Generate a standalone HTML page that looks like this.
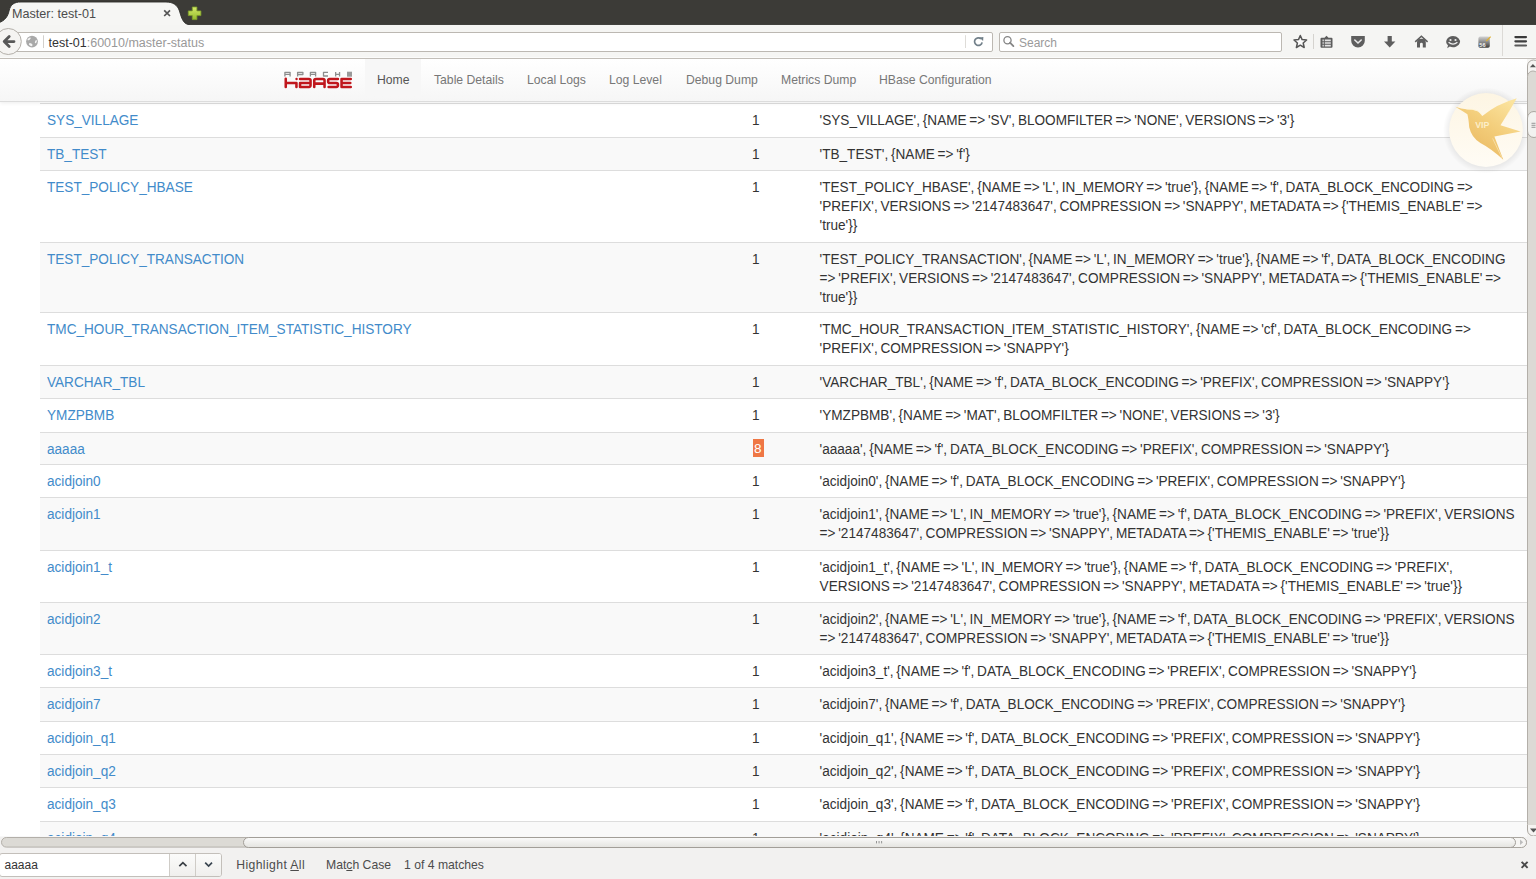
<!DOCTYPE html>
<html><head><meta charset="utf-8">
<style>
*{box-sizing:border-box}
html,body{margin:0;padding:0;width:1536px;height:879px;overflow:hidden;background:#fff;font-family:"Liberation Sans",sans-serif;position:relative}
.abs{position:absolute}
#tabbar{left:0;top:0;width:1536px;height:25px;background:#3c3b37}
#toolbar{left:0;top:25px;width:1536px;height:34px;background:#f5f5f3;border-bottom:1px solid #c2beb8}
#tabtitle{left:12px;top:5.6px;font-size:12.6px;color:#4c4c4c;line-height:16px;white-space:nowrap}
#urlbar{left:14px;top:32px;width:979px;height:20px;background:#fff;border:1px solid #bcb8b2;border-radius:2px}
#urltext{left:48.5px;top:35px;font-size:12.5px;line-height:16px;white-space:nowrap;color:#999}
#urltext b{font-weight:normal;color:#333}
#searchbar{left:999px;top:32px;width:283px;height:20px;background:#fff;border:1px solid #bcb8b2;border-radius:2px}
#searchtext{left:1019px;top:35.3px;font-size:12px;line-height:16px;color:#9a9a9a}
#content{left:0;top:59px;width:1527px;height:778px;overflow:hidden;background:#fff}
#vscroll{left:1527px;top:59px;width:9px;height:778px;background:#dcdad5;border-left:1px solid #b5b1ab}
#hscroll{left:0;top:837px;width:1527px;height:11px;background:#f2f1f0}
#corner{left:1527px;top:837px;width:9px;height:11px;background:#f2f1f0}
#findbar{left:0;top:848px;width:1536px;height:31px;background:#f2f1f0}
.ftxt{top:9.2px;font-size:12.2px;line-height:16px;color:#4c4c4c;white-space:nowrap}
.ftxt u{text-decoration:underline;text-underline-offset:1px}
/* page */
#navbar{left:0;top:0;width:1527px;height:43px;background:linear-gradient(#ffffff,#f6f6f6);border-bottom:1px solid #dcdcdc;box-shadow:0 1px 4px rgba(0,0,0,.08);z-index:5}
.nav{top:-0.3px;height:42px;font-size:12.2px;line-height:42px;color:#777;white-space:nowrap}
#active{left:365px;top:0;width:56px;height:36px;background:#f7f7f7}
table{position:absolute;left:40px;top:44px;border-collapse:collapse;table-layout:fixed;width:1572px;font-size:13.6px;word-spacing:-1px;color:#333;white-space:nowrap}
td{border-top:1px solid #ddd;padding:6px 7px 5px;line-height:19.15px;vertical-align:top}
td.c1{width:705px}
td.c2{width:67px}
td.c3{width:800px;padding-left:7.6px}
tr:nth-child(even) td{background:#f9f9f9}
a{color:#428bca;text-decoration:none}
.s{display:inline-block;transform:scaleY(1.08);transform-origin:0 4.3px}
.hl{background:#ef7745;color:#fff;display:inline-block;padding:1px 2.5px 0 1.5px;line-height:17px;margin-left:0.5px}
</style></head><body>
<div id="tabbar" class="abs"></div>
<svg class="abs" style="left:0;top:0" width="1536" height="26" viewBox="0 0 1536 26">
  <path d="M-2 23 C5 21 8 16 9 11 C10.5 4.5 14 2 21 2 L166 2 C173 2 177.5 5 179.5 11 C182 20 184 24.6 190 24.6 L1536 24.6 L1536 26 L-2 26 Z" fill="#f6f6f4" stroke="#2d2c29" stroke-width="0.9"/>
  <defs><linearGradient id="plg" x1="0" y1="0" x2="0" y2="1"><stop offset="0" stop-color="#d5ea6a"/><stop offset="1" stop-color="#94bb2c"/></linearGradient></defs>
  <path d="M192.3 7 h4.6 v3.9 h4 v4.7 h-4 v4 h-4.6 v-4 h-4 v-4.7 h4 z" fill="url(#plg)" stroke="#7fa02a" stroke-width="0.8"/>
  <path d="M164.2 10.3 L170 16 M170 10.3 L164.2 16" stroke="#555" stroke-width="1.7"/>
</svg>
<div id="toolbar" class="abs"></div>
<div id="tabtitle" class="abs">Master: test-01</div>
<div id="urlbar" class="abs"></div>
<div id="searchbar" class="abs"></div>
<svg class="abs" style="left:0;top:25px" width="1536" height="34" viewBox="0 25 1536 34">
  <circle cx="8.3" cy="41.5" r="13" fill="#f5f4f2" stroke="#b3afa9" stroke-width="1"/>
  <path d="M4.2 41.6 L9.2 36.6 M4.2 41.6 L9.2 46.6 M4.2 41.6 H14" stroke="#585858" stroke-width="2.8" fill="none" stroke-linecap="round" stroke-linejoin="round"/>
  <circle cx="32" cy="41.6" r="5.9" fill="#a9a9a9"/>
  <ellipse cx="29.1" cy="38.9" rx="1.9" ry="0.9" transform="rotate(-35 29.1 38.9)" fill="#f4f4f4"/>
  <ellipse cx="35.9" cy="41.7" rx="0.8" ry="1.7" transform="rotate(25 35.9 41.7)" fill="#f4f4f4"/>
  <ellipse cx="30.7" cy="44.6" rx="2.0" ry="1.25" transform="rotate(35 30.7 44.6)" fill="#f4f4f4"/>
  <rect x="43" y="35.3" width="1" height="12.7" fill="#d2d0cc"/>
  <rect x="965" y="35.2" width="1" height="12.8" fill="#dedcd8"/>
  <path d="M981 38.9 A3.8 3.8 0 1 0 982.1 42.3" stroke="#72808a" stroke-width="1.7" fill="none"/>
  <path d="M979.3 37.6 L983.4 36.9 L983.1 40.9 Z" fill="#72808a"/>
  <circle cx="1007.5" cy="40.2" r="3.6" stroke="#858585" stroke-width="1.3" fill="none"/>
  <path d="M1010 42.7 L1013.4 46.1" stroke="#858585" stroke-width="1.8" stroke-linecap="round"/>
  <path d="M1300.3 35.5 L1302.1 39.6 L1306.6 40 L1303.2 43 L1304.2 47.5 L1300.3 45.2 L1296.4 47.5 L1297.4 43 L1294 40 L1298.5 39.6 Z" fill="#fafafa" stroke="#555" stroke-width="1.5" stroke-linejoin="round"/>
  <rect x="1313" y="34" width="1" height="15" fill="#d5d3cf"/>
  <path d="M1321.5 37.7 h10 a1 1 0 0 1 1 1 v8 a1 1 0 0 1 -1 1 h-10 a1 1 0 0 1 -1 -1 v-8 a1 1 0 0 1 1 -1z M1324.5 37.7 l2 -2 l2 2z" fill="#5c5c5c"/>
  <path d="M1322.5 39.6 h1.3 v1.6 h-1.3z M1324.8 39.6 h6 v1.6 h-6z M1322.5 42.2 h1.3 v1.6 h-1.3z M1324.8 42.2 h6 v1.6 h-6z M1322.5 44.8 h1.3 v1.6 h-1.3z M1324.8 44.8 h6 v1.6 h-6z" fill="#e4e4e4"/>
  <path d="M1351.2 36 h13.6 v4.8 a6.8 6.8 0 0 1 -13.6 0 z" fill="#5e5e5e"/>
  <path d="M1354.8 40 L1358 43 L1361.2 40" stroke="#e8e8e8" stroke-width="1.6" fill="none" stroke-linecap="round"/>
  <path d="M1387.6 36 h4.2 v5.6 h3.6 L1389.7 47.6 L1384 41.6 h3.6z" fill="#5e5e5e"/>
  <path d="M1415.2 41.9 L1421.4 36.2 L1427.6 41.9" stroke="#5e5e5e" stroke-width="1.5" fill="none"/>
  <path d="M1417 47.6 V42.2 a4.4 3.4 0 0 1 8.8 0 V47.6 H1422.8 V44 a1.4 1.2 0 0 0 -2.8 0 V47.6 z" fill="#5e5e5e"/>
  <path d="M1453 36 a7 5.6 0 1 1 -3.2 10.6 L1447.2 48.3 L1448 45.3 A7 5.6 0 0 1 1453 36z" fill="#5e5e5e"/>
  <circle cx="1450.5" cy="40" r="1.1" fill="#eee"/><circle cx="1455.5" cy="40" r="1.1" fill="#eee"/>
  <path d="M1448.6 42.3 q4.4 3.6 8.8 0" stroke="#eee" stroke-width="1.4" fill="none"/>
  <defs><linearGradient id="nbg" x1="0" y1="0" x2="0" y2="1"><stop offset="0" stop-color="#d2d2d2"/><stop offset="1" stop-color="#3d3d3d"/></linearGradient></defs>
  <rect x="1478.4" y="36.6" width="11.4" height="11.2" rx="1.8" fill="url(#nbg)"/>
  <path d="M1486.3 41 L1490.6 36.6" stroke="#e0b030" stroke-width="1.3"/>
  <text x="1479.3" y="46.6" font-size="5.6" font-weight="bold" font-family="Liberation Sans" fill="#f4f4f4">56</text>
  <rect x="1502" y="25" width="1" height="31" fill="#dcdad6"/>
  <rect x="0" y="57" width="1536" height="1" fill="#fbfbfa"/>
  <rect x="1514.3" y="36" width="12.8" height="2.2" rx="1.1" fill="#3a3a3a"/>
  <rect x="1514.3" y="40.2" width="12.8" height="2.2" rx="1.1" fill="#3f3f3f"/>
  <rect x="1514.3" y="44.4" width="12.8" height="2.2" rx="1.1" fill="#5a5a5a"/>
</svg>
<div id="urltext" class="abs"><b>test-01</b>:60010/master-status</div>
<div id="searchtext" class="abs">Search</div>

<div id="content" class="abs">
<table>
<tr style="height:34px"><td class="c1"><span class="s"><a>SYS_VILLAGE</a></span></td><td class="c2"><span class="s">1</span></td><td class="c3"><span class="s">'SYS_VILLAGE', {NAME =&gt; 'SV', BLOOMFILTER =&gt; 'NONE', VERSIONS =&gt; '3'}</span></td></tr>
<tr style="height:33px"><td class="c1"><span class="s"><a>TB_TEST</a></span></td><td class="c2"><span class="s">1</span></td><td class="c3"><span class="s">'TB_TEST', {NAME =&gt; 'f'}</span></td></tr>
<tr style="height:72px"><td class="c1"><span class="s"><a>TEST_POLICY_HBASE</a></span></td><td class="c2"><span class="s">1</span></td><td class="c3"><span class="s">'TEST_POLICY_HBASE', {NAME =&gt; 'L', IN_MEMORY =&gt; 'true'}, {NAME =&gt; 'f', DATA_BLOCK_ENCODING =&gt;</span><br><span class="s">'PREFIX', VERSIONS =&gt; '2147483647', COMPRESSION =&gt; 'SNAPPY', METADATA =&gt; {'THEMIS_ENABLE' =&gt;</span><br><span class="s">'true'}}</span></td></tr>
<tr style="height:70px"><td class="c1"><span class="s"><a>TEST_POLICY_TRANSACTION</a></span></td><td class="c2"><span class="s">1</span></td><td class="c3"><span class="s">'TEST_POLICY_TRANSACTION', {NAME =&gt; 'L', IN_MEMORY =&gt; 'true'}, {NAME =&gt; 'f', DATA_BLOCK_ENCODING</span><br><span class="s">=&gt; 'PREFIX', VERSIONS =&gt; '2147483647', COMPRESSION =&gt; 'SNAPPY', METADATA =&gt; {'THEMIS_ENABLE' =&gt;</span><br><span class="s">'true'}}</span></td></tr>
<tr style="height:53px"><td class="c1"><span class="s"><a>TMC_HOUR_TRANSACTION_ITEM_STATISTIC_HISTORY</a></span></td><td class="c2"><span class="s">1</span></td><td class="c3"><span class="s">'TMC_HOUR_TRANSACTION_ITEM_STATISTIC_HISTORY', {NAME =&gt; 'cf', DATA_BLOCK_ENCODING =&gt;</span><br><span class="s">'PREFIX', COMPRESSION =&gt; 'SNAPPY'}</span></td></tr>
<tr style="height:33px"><td class="c1"><span class="s"><a>VARCHAR_TBL</a></span></td><td class="c2"><span class="s">1</span></td><td class="c3"><span class="s">'VARCHAR_TBL', {NAME =&gt; 'f', DATA_BLOCK_ENCODING =&gt; 'PREFIX', COMPRESSION =&gt; 'SNAPPY'}</span></td></tr>
<tr style="height:34px"><td class="c1"><span class="s"><a>YMZPBMB</a></span></td><td class="c2"><span class="s">1</span></td><td class="c3"><span class="s">'YMZPBMB', {NAME =&gt; 'MAT', BLOOMFILTER =&gt; 'NONE', VERSIONS =&gt; '3'}</span></td></tr>
<tr style="height:32px"><td class="c1"><span class="s"><a>aaaaa</a></span></td><td class="c2"><span class="hl">8</span></td><td class="c3"><span class="s">'aaaaa', {NAME =&gt; 'f', DATA_BLOCK_ENCODING =&gt; 'PREFIX', COMPRESSION =&gt; 'SNAPPY'}</span></td></tr>
<tr style="height:33px"><td class="c1"><span class="s"><a>acidjoin0</a></span></td><td class="c2"><span class="s">1</span></td><td class="c3"><span class="s">'acidjoin0', {NAME =&gt; 'f', DATA_BLOCK_ENCODING =&gt; 'PREFIX', COMPRESSION =&gt; 'SNAPPY'}</span></td></tr>
<tr style="height:53px"><td class="c1"><span class="s"><a>acidjoin1</a></span></td><td class="c2"><span class="s">1</span></td><td class="c3"><span class="s">'acidjoin1', {NAME =&gt; 'L', IN_MEMORY =&gt; 'true'}, {NAME =&gt; 'f', DATA_BLOCK_ENCODING =&gt; 'PREFIX', VERSIONS</span><br><span class="s">=&gt; '2147483647', COMPRESSION =&gt; 'SNAPPY', METADATA =&gt; {'THEMIS_ENABLE' =&gt; 'true'}}</span></td></tr>
<tr style="height:52px"><td class="c1"><span class="s"><a>acidjoin1_t</a></span></td><td class="c2"><span class="s">1</span></td><td class="c3"><span class="s">'acidjoin1_t', {NAME =&gt; 'L', IN_MEMORY =&gt; 'true'}, {NAME =&gt; 'f', DATA_BLOCK_ENCODING =&gt; 'PREFIX',</span><br><span class="s">VERSIONS =&gt; '2147483647', COMPRESSION =&gt; 'SNAPPY', METADATA =&gt; {'THEMIS_ENABLE' =&gt; 'true'}}</span></td></tr>
<tr style="height:52px"><td class="c1"><span class="s"><a>acidjoin2</a></span></td><td class="c2"><span class="s">1</span></td><td class="c3"><span class="s">'acidjoin2', {NAME =&gt; 'L', IN_MEMORY =&gt; 'true'}, {NAME =&gt; 'f', DATA_BLOCK_ENCODING =&gt; 'PREFIX', VERSIONS</span><br><span class="s">=&gt; '2147483647', COMPRESSION =&gt; 'SNAPPY', METADATA =&gt; {'THEMIS_ENABLE' =&gt; 'true'}}</span></td></tr>
<tr style="height:33px"><td class="c1"><span class="s"><a>acidjoin3_t</a></span></td><td class="c2"><span class="s">1</span></td><td class="c3"><span class="s">'acidjoin3_t', {NAME =&gt; 'f', DATA_BLOCK_ENCODING =&gt; 'PREFIX', COMPRESSION =&gt; 'SNAPPY'}</span></td></tr>
<tr style="height:34px"><td class="c1"><span class="s"><a>acidjoin7</a></span></td><td class="c2"><span class="s">1</span></td><td class="c3"><span class="s">'acidjoin7', {NAME =&gt; 'f', DATA_BLOCK_ENCODING =&gt; 'PREFIX', COMPRESSION =&gt; 'SNAPPY'}</span></td></tr>
<tr style="height:33px"><td class="c1"><span class="s"><a>acidjoin_q1</a></span></td><td class="c2"><span class="s">1</span></td><td class="c3"><span class="s">'acidjoin_q1', {NAME =&gt; 'f', DATA_BLOCK_ENCODING =&gt; 'PREFIX', COMPRESSION =&gt; 'SNAPPY'}</span></td></tr>
<tr style="height:33px"><td class="c1"><span class="s"><a>acidjoin_q2</a></span></td><td class="c2"><span class="s">1</span></td><td class="c3"><span class="s">'acidjoin_q2', {NAME =&gt; 'f', DATA_BLOCK_ENCODING =&gt; 'PREFIX', COMPRESSION =&gt; 'SNAPPY'}</span></td></tr>
<tr style="height:34px"><td class="c1"><span class="s"><a>acidjoin_q3</a></span></td><td class="c2"><span class="s">1</span></td><td class="c3"><span class="s">'acidjoin_q3', {NAME =&gt; 'f', DATA_BLOCK_ENCODING =&gt; 'PREFIX', COMPRESSION =&gt; 'SNAPPY'}</span></td></tr>
<tr style="height:33px"><td class="c1"><span class="s"><a>acidjoin_q4</a></span></td><td class="c2"><span class="s">1</span></td><td class="c3"><span class="s">'acidjoin_q4', {NAME =&gt; 'f', DATA_BLOCK_ENCODING =&gt; 'PREFIX', COMPRESSION =&gt; 'SNAPPY'}</span></td></tr>
</table>
<div id="navbar" class="abs">
  <div id="active" class="abs"></div>
  <div class="abs nav" style="left:377px;color:#555">Home</div>
  <div class="abs nav" style="left:434px">Table Details</div>
  <div class="abs nav" style="left:527px">Local Logs</div>
  <div class="abs nav" style="left:609px">Log Level</div>
  <div class="abs nav" style="left:686px">Debug Dump</div>
  <div class="abs nav" style="left:781px">Metrics Dump</div>
  <div class="abs nav" style="left:879px">HBase Configuration</div>
</div>
</div>
<div id="vscroll" class="abs"></div>
<svg class="abs" style="left:1527px;top:59px" width="9" height="778" viewBox="1527 59 9 778">
  <rect x="1527" y="59" width="9" height="778" fill="#f5f4f2"/>
  <rect x="1527.5" y="72" width="12" height="758" rx="5.5" fill="#dcdad5" stroke="#b3afa9" stroke-width="1"/>
  <path d="M1527.5 76 V66 a6 6 0 0 1 12 0 V76" fill="#f5f4f2" stroke="#aaa6a0" stroke-width="1"/>
  <path d="M1529.9 67.3 L1532.9 63.9 L1535.9 67.3z" fill="#555"/>
  <path d="M1527.5 84 V76.5 a5.5 5.5 0 0 1 11 0 V84" fill="#dcdad5" stroke="#b3afa9" stroke-width="1"/>
  <path d="M1527.5 131 V118 a6.5 6.5 0 0 1 13 0 V131 a6.5 6.5 0 0 1 -13 0z" fill="#f2f2f0" stroke="#aaa6a0" stroke-width="1"/>
  <rect x="1531.5" y="122.8" width="4" height="0.9" fill="#8a8a8a"/>
  <rect x="1531.5" y="124.8" width="4" height="0.9" fill="#8a8a8a"/>
  <rect x="1531.5" y="126.8" width="4" height="0.9" fill="#8a8a8a"/>
  <path d="M1527.5 825 V830 a6 6 0 0 0 12 0 V825" fill="#f5f4f2" stroke="#aaa6a0" stroke-width="1"/>
  <path d="M1530 828.5 L1533.5 832.5 L1537 828.5z" fill="#555"/>
</svg>
<svg class="abs" style="left:0;top:836px" width="1536" height="13" viewBox="0 836 1536 13">
  <rect x="0" y="836" width="1536" height="13" fill="#f2f1f0"/>
  <rect x="0" y="836" width="1527" height="1" fill="#f8f8f8"/>
  <rect x="1.5" y="837.5" width="1525" height="9.6" rx="4.8" fill="#dcdad5" stroke="#b3afa9" stroke-width="1"/>
  <path d="M1505 837.5 H1521.5 a5 5 0 0 1 5 5 a5 5 0 0 1 -5 5 H1505z" fill="#f6f5f3" stroke="#aaa6a0" stroke-width="1"/>
  
  <defs><linearGradient id="thg" x1="0" y1="0" x2="0" y2="1"><stop offset="0" stop-color="#fbfbfa"/><stop offset="1" stop-color="#e4e3e0"/></linearGradient></defs>
  <path d="M248.5 837.5 H1510.5 a5 5 0 0 1 5 5 a5 5 0 0 1 -5 5 H248.5 a5 5 0 0 1 -5 -5 a5 5 0 0 1 5 -5z" fill="url(#thg)" stroke="#a29e98" stroke-width="1"/>
  <path d="M1520 839.6 L1523.2 842.3 L1520 845z" fill="#bdbdbd"/>
  <rect x="876" y="841" width="0.9" height="2.4" fill="#8a8a8a"/>
  <rect x="878.6" y="841" width="0.9" height="2.4" fill="#8a8a8a"/>
  <rect x="881.2" y="841" width="0.9" height="2.4" fill="#8a8a8a"/>
</svg>
<div id="findbar" class="abs">
  <div class="abs" style="left:-1px;top:4.5px;width:223px;height:24px;background:#fff;border:1px solid #c3bfba;border-radius:3px"></div>
  <div class="abs" style="left:169px;top:5.5px;width:52px;height:22px;background:linear-gradient(#fbfbfa,#f0efed);border-left:1px solid #cfccc7;border-radius:0 2px 2px 0"></div>
  <div class="abs" style="left:195px;top:5.5px;width:1px;height:22px;background:#cfccc7"></div>
  <svg class="abs" style="left:0;top:0" width="240" height="31" viewBox="0 848 240 31">
    <path d="M179.3 866.2 L182.9 862.6 L186.5 866.2" stroke="#3a3f45" stroke-width="1.7" fill="none"/>
    <path d="M205.2 862.6 L208.6 866 L212 862.6" stroke="#3a4550" stroke-width="1.7" fill="none"/>
  </svg>
  <div class="abs ftxt" style="left:4.5px;color:#333;font-size:12px">aaaaa</div>
  <div class="abs ftxt" style="left:236.2px;letter-spacing:0.4px">Highlight <u>A</u>ll</div>
  <div class="abs ftxt" style="left:326px">Mat<u>c</u>h Case</div>
  <div class="abs ftxt" style="left:404px">1 of 4 matches</div>
  <svg class="abs" style="left:1518px;top:11px" width="12" height="12" viewBox="0 0 12 12"><path d="M3.6 2.8 L9.6 8.8 M9.6 2.8 L3.6 8.8" stroke="#4a4a4a" stroke-width="1.9"/></svg>
</div>
<svg class="abs" style="left:0;top:0;z-index:10" width="1536" height="879" viewBox="0 0 1536 879">
  <g fill="none" stroke="#c0171d" stroke-width="2.55" stroke-linecap="round" stroke-linejoin="round">
    <path d="M285.75 78.7 V86.9 M285.75 83.05 H296.45 V86.9"/>
    <path d="M300.05 79 H309 Q310.55 79 310.55 80.6 V85.35 Q310.55 86.9 309 86.9 H300.05 V83.05 H310.3"/>
    <path d="M314.25 86.9 V80.6 Q314.25 79 315.85 79 H323 Q324.55 79 324.55 80.6 V86.9 M314.25 83.6 H324.55"/>
    <path d="M337.95 79 H329.75 Q328.15 79 328.15 80.6 V81.5 Q328.15 83.05 329.75 83.05 H336.35 Q337.95 83.05 337.95 84.65 V85.35 Q337.95 86.9 336.35 86.9 H328.6"/>
    <path d="M350.75 79 H341.55 V86.9 H350.75 M341.55 83.05 H350.3"/>
  </g>
  <circle cx="296.55" cy="79" r="1.2" fill="#c0171d"/>
  <g fill="none" stroke="#8d8d8d" stroke-width="1.3" stroke-linejoin="round">
    <path d="M284.9 76.6 V72.3 H290.1 V76.6 M284.9 74.4 H290.1"/>
    <path d="M297.6 76.6 V72.3 H302.9 V74.5 H297.6"/>
    <path d="M310.4 76.6 V72.3 H315.6 V76.6 M310.4 74.4 H315.6"/>
    <path d="M328 72.3 H323.5 V76 H328"/>
    <path d="M335.65 71.9 V76.6 M339.55 71.9 V76.6 M335.65 74.3 H339.55"/>
  </g>
  <rect x="347" y="71.7" width="5" height="5" fill="#9a9a9a"/>
  <defs>
    <radialGradient id="vsh" cx="0.5" cy="0.5" r="0.5"><stop offset="0.84" stop-color="#000" stop-opacity="0.07"/><stop offset="1" stop-color="#000" stop-opacity="0"/></radialGradient>
    <linearGradient id="vbg" x1="0" y1="0" x2="0" y2="1"><stop offset="0" stop-color="#fdf5e3"/><stop offset="1" stop-color="#fffcf5"/></linearGradient>
    <linearGradient id="bird" x1="0.85" y1="0.05" x2="0.25" y2="0.9"><stop offset="0" stop-color="#fbe39e"/><stop offset="0.5" stop-color="#f3cd7a"/><stop offset="1" stop-color="#eab962"/></linearGradient>
  </defs>
  <circle cx="1486" cy="130.5" r="43" fill="url(#vsh)"/>
  <circle cx="1486" cy="130" r="36.9" fill="url(#vbg)"/>
  <path d="M1455.3 106.7 Q1461.5 108.9 1466.5 109.3 Q1473 109.2 1477.6 111.3 Q1480.5 113.3 1482.3 116 Q1497 104 1516.8 98.3 Q1509 112 1500.5 125.3 L1520.6 131.4 L1494.4 136.5 L1503.3 159.8 Q1491 148.5 1480.4 143 Q1471.5 137.5 1469.2 127.2 Q1468.6 119 1467.4 114.3 Q1462 110.6 1455.3 106.7 Z" fill="url(#bird)"/>
  <path d="M1466.5 109.3 Q1473 108.6 1477.6 110.8 Q1480.5 112.8 1482.3 115.5" stroke="#fff3cf" stroke-width="0.8" fill="none" opacity="0.8"/>
  <path d="M1492.6 138.4 L1502 158" stroke="#fff0c8" stroke-width="0.8" opacity="0.7"/>
  <path d="M1509.5 111 L1507 115" stroke="#fff0c8" stroke-width="0.8" opacity="0.7"/>
  <text x="1475.2" y="128.2" font-family="Liberation Sans" font-weight="bold" font-size="8.8" fill="#fdf1cf" fill-opacity="0.95">VIP</text>
</svg>
</body></html>
